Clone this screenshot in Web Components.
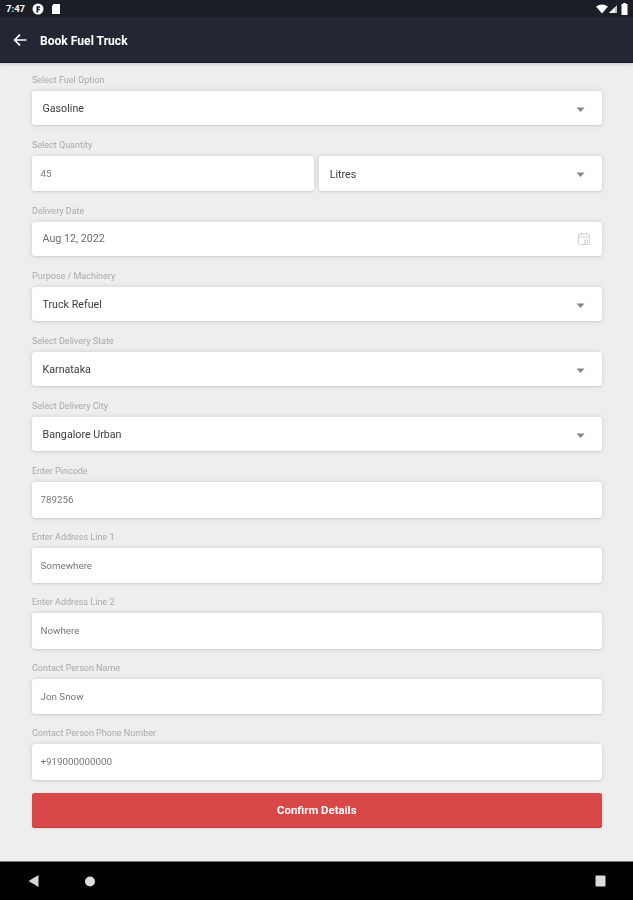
<!DOCTYPE html>
<html><head><meta charset="utf-8"><title>Book Fuel Truck</title>
<style>
html,body{margin:0;padding:0;background:#eee}
body{width:633px;height:900px;overflow:hidden;font-family:Roboto,"Liberation Sans",sans-serif}
</style></head><body>
<app-screen>
<status-bar slot="status"></status-bar>
<app-bar slot="bar" title="Book Fuel Truck"></app-bar>
<form-field label="Select Fuel Option"><pick-box value="Gasoline" strong></pick-box></form-field>
<form-field label="Select Quantity"><div style="display:flex;gap:5px"><text-box value="45" style="flex:1" h="35"></text-box><pick-box value="Litres" strong style="flex:1" h="35"></pick-box></div></form-field>
<form-field label="Delivery Date"><pick-box value="Aug 12, 2022" icon="cal" big></pick-box></form-field>
<form-field label="Purpose / Machinery"><pick-box value="Truck Refuel" strong></pick-box></form-field>
<form-field label="Select Delivery State"><pick-box value="Karnataka" strong></pick-box></form-field>
<form-field label="Select Delivery City"><pick-box value="Bangalore Urban" strong></pick-box></form-field>
<form-field tall label="Enter Pincode"><text-box value="789256"></text-box></form-field>
<form-field tall label="Enter Address Line 1"><text-box value="Somewhere"></text-box></form-field>
<form-field tall label="Enter Address Line 2"><text-box value="Nowhere"></text-box></form-field>
<form-field tall label="Contact Person Name"><text-box value="Jon Snow"></text-box></form-field>
<form-field tall label="Contact Person Phone Number"><text-box value="+919000000000"></text-box></form-field>
<red-button>Confirm Details</red-button>
<nav-bar slot="nav"></nav-bar>
</app-screen>
<script>
function def(name, css, html){
  customElements.define(name, class extends HTMLElement{
    connectedCallback(){
      if(this.shadowRoot) return;
      const r=this.attachShadow({mode:'open'});
      r.innerHTML='<style>'+css+'</style>'+(typeof html==='function'?html(this):html);
    }
  });
}
def('app-screen',`
:host{display:flex;flex-direction:column;width:633px;height:900px;filter:blur(.4px)}
main{flex:1;display:flex;flex-direction:column;padding:12px 31.5px 0 32px;min-height:0}
`,`<slot name="status"></slot><slot name="bar"></slot><main><slot></slot></main><slot name="nav"></slot>`);
def('status-bar',`
:host{display:flex;align-items:center;height:17px;background:#1a1e27;color:#fff;padding:0 5px 0 6px;font:700 9.5px Roboto,sans-serif;flex:none}
span{width:20px}
svg{display:block}
.sp{flex:1}
`,`<span>7:47</span>
<svg width="14" height="14" viewBox="0 0 14 14" style="margin-left:5px"><circle cx="7" cy="7" r="5.5" fill="#fff"/><path d="M5.500 10.500V4.200h3.600v1.600H7.200v1h1.600v1.400H7.200v2.300z" fill="#1a1e27"/></svg>
<svg width="10" height="12" viewBox="0 0 10 12" style="margin-left:6px"><path d="M2.500 1H9v10H1V3z" fill="#fff"/></svg>
<i class="sp"></i>
<svg width="12" height="10" viewBox="0 0 12 10"><path d="M0 2.600Q6-1.600 12 2.600L6 9.600z" fill="#fff"/></svg>
<svg width="10" height="10" viewBox="0 0 10 10"><path d="M9 1V9H1z" fill="#bfc0c2"/><path d="M7 3.200V9H1z" fill="#eee"/></svg>
<svg width="7" height="12" viewBox="0 0 7 12" style="margin-left:3px"><path d="M2 0h3v1h1.500v11H.5V1H2z" fill="#fff"/></svg>`);
def('app-bar',`
:host{display:flex;align-items:center;height:45px;background:#222733;color:#fff;flex:none;box-shadow:0 1px 0 #10192a,0 2px 4px rgba(0,0,0,.18);position:relative;z-index:1;padding-left:13px}
h1{font:700 12.1px Roboto,sans-serif;margin:3px 0 0 13px}
svg{display:block;margin-top:1px}
`,t=>`<svg width="14" height="14" viewBox="0 0 14 14"><path d="M13.500 7H2M7 1.600 1.600 7 7 12.400" fill="none" stroke="#fff" stroke-width="1.700"/></svg><h1>${t.getAttribute('title')}</h1>`);
def('form-field',`
:host{display:block;margin-bottom:14px}
:host([tall]){margin-bottom:13px}
label{display:block;font:400 9px/12px Roboto,sans-serif;color:#a9a9a9;margin-bottom:5px}
`,t=>`<label>${t.getAttribute('label')}</label><slot></slot>`);
const boxCss=`
:host{display:block}
.b{display:flex;align-items:center;background:#fff;border-radius:3px;box-shadow:0 0 5px rgba(0,0,0,.13),0 1px 2px rgba(0,0,0,.08);box-sizing:border-box}
span{flex:1;white-space:nowrap}
svg{display:block}
`;
def('pick-box',boxCss+`
.b{padding:0 17px 0 10.500px}
`,t=>{
  const big=t.hasAttribute('big'),cal=t.getAttribute('icon')==='cal';
  const h=t.getAttribute('h')||34;
  const ico=cal?`<svg width="14" height="14" viewBox="0 0 14 14" style="margin-right:-6px"><path d="M2.500 2h9a1 1 0 0 1 1 1v8.500a1 1 0 0 1-1 1h-9a1 1 0 0 1-1-1V3a1 1 0 0 1 1-1zM1.500 5h11M4.500 .5V3M9.500 .5V3M7.500 8h3v3h-3z" fill="none" stroke="#d2d2d2" stroke-width="1"/></svg>`
   :`<svg width="9" height="6" viewBox="0 0 9 6" style="margin-top:3px"><path d="M.5.500h8L4.500 5z" fill="#868686"/></svg>`;
  return `<div class="b" style="height:${h}px"><span style="font:400 10.700px Roboto,sans-serif;color:${big?'#6b6b6b':'#3c3c3c'};position:relative;top:${big?-.5:.5}px">${t.getAttribute('value')}</span>${ico}</div>`;
});
def('text-box',boxCss+`
.b{padding:0 8.500px}
span{font:400 9.800px Roboto,sans-serif;color:#777}
`,t=>`<div class="b" style="height:${t.getAttribute('h')||35.5}px"><span>${t.getAttribute('value')}</span></div>`);
def('red-button',`
:host{display:flex;align-items:center;justify-content:center;height:34px;background:#d84848;border-radius:2.500px;color:#fff;font:700 11.400px Roboto,sans-serif;box-shadow:0 1px 0 #c23a3a,0 1px 3px rgba(0,0,0,.15);flex:none}
`,`<slot></slot>`);
def('nav-bar',`
:host{display:flex;align-items:center;height:38px;background:#000;flex:none;padding:0 27px 0 28px;box-shadow:0 -1px 0 #777;position:relative}
svg{display:block}
.sp{flex:1}
`,`<svg width="11" height="12" viewBox="0 0 11 12"><path d="M10.500 0v12L.5 6z" fill="#d6d6d6"/></svg>
<svg width="10" height="11" viewBox="0 0 10 11" style="margin-left:46px"><circle cx="5" cy="5.500" r="5" fill="#dcdcdc"/></svg>
<i class="sp"></i>
<svg width="11" height="12" viewBox="0 0 11 12"><rect x=".5" y=".5" width="10" height="11" rx="1" fill="#dcdcdc"/></svg>`);
</script>
</body></html>
